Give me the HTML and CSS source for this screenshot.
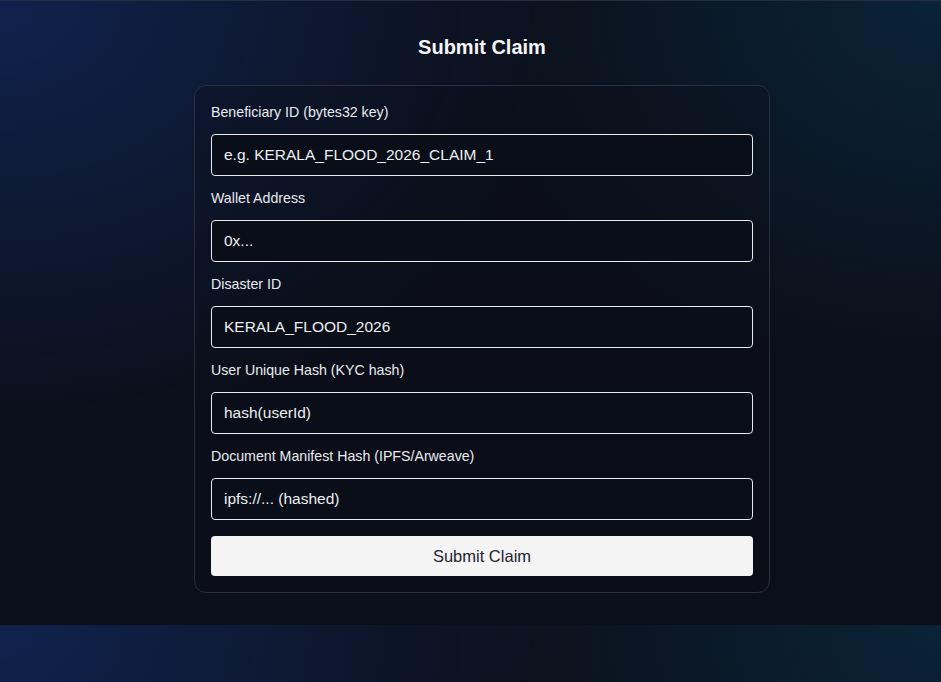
FILE: index.html
```html
<!DOCTYPE html>
<html lang="en">
<head>
<meta charset="utf-8">
<title>Submit Claim</title>
<link rel="stylesheet" href="styles.css">
</head>
<body>
<main class="page">
  <h1 class="title">Submit Claim</h1>
  <form class="card">
    <label class="field">
      <span class="label">Beneficiary ID (bytes32 key)</span>
      <input class="input" type="text" placeholder="e.g. KERALA_FLOOD_2026_CLAIM_1">
    </label>
    <label class="field">
      <span class="label">Wallet Address</span>
      <input class="input" type="text" placeholder="0x...">
    </label>
    <label class="field">
      <span class="label">Disaster ID</span>
      <input class="input" type="text" value="KERALA_FLOOD_2026">
    </label>
    <label class="field">
      <span class="label">User Unique Hash (KYC hash)</span>
      <input class="input" type="text" placeholder="hash(userId)">
    </label>
    <label class="field">
      <span class="label">Document Manifest Hash (IPFS/Arweave)</span>
      <input class="input" type="text" placeholder="ipfs://... (hashed)">
    </label>
    <button class="submit" type="button">Submit Claim</button>
  </form>
</main>
</body>
</html>
```

FILE: styles.css
```css
html {
  background-color: #0b0f19;
  background-image:
    radial-gradient(ellipse 60% 70% at 0% 0%, rgba(20, 50, 120, 0.55), rgba(20, 50, 120, 0) 100%),
    radial-gradient(ellipse 50% 60% at 100% 0%, rgba(10, 55, 85, 0.5), rgba(10, 55, 85, 0) 100%);
}

body {
  margin: 0;
  font-family: "Liberation Sans", Arial, sans-serif;
  color: #f3f4f6;
}

.page {
  border-top: 1px solid #262d3d;
  padding: 32px 0 32px 23px;
  display: flex;
  flex-direction: column;
  align-items: center;
}

.title {
  margin: 0 0 24px;
  font-size: 20px;
  line-height: 28px;
  font-weight: 700;
  color: #f5f6f8;
}

.card {
  width: 576px;
  box-sizing: border-box;
  border: 1px solid #283041;
  border-radius: 12px;
  background: rgba(11, 15, 25, 0.35);
  padding: 16px;
  display: flex;
  flex-direction: column;
  gap: 12px;
}

.field {
  display: flex;
  flex-direction: column;
  gap: 12px;
}

.label {
  font-size: 14.2px;
  line-height: 20px;
  color: #e8eaee;
}

.input {
  height: 42px;
  box-sizing: border-box;
  border: 1px solid #e9ebef;
  border-radius: 4px;
  background: #0a0e18;
  padding: 0 12px;
  font-family: "Liberation Sans", Arial, sans-serif;
  font-size: 15.5px;
  color: #eceef2;
  outline: none;
}

.input::placeholder {
  color: #eceef2;
  opacity: 1;
}

.submit {
  margin-top: 4px;
  height: 40px;
  border: none;
  border-radius: 4px;
  background: #f4f4f5;
  color: #1f2430;
  font-family: "Liberation Sans", Arial, sans-serif;
  font-size: 16.5px;
  cursor: pointer;
}
```
